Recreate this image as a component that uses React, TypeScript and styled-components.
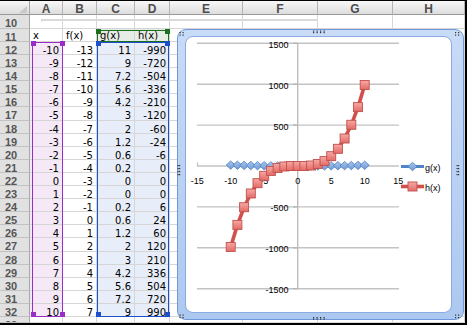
import React from 'react';
import styled, { createGlobalStyle } from 'styled-components';

const GlobalStyle = createGlobalStyle`
  html, body { margin: 0; padding: 0; background: #fff; }
  body { font-family: "DejaVu Sans", Verdana, sans-serif; }
`;

const COLS = [30, 33, 34, 38, 35, 73, 75, 75, 72];
const LETTERS = ['A', 'B', 'C', 'D', 'E', 'F', 'G', 'H'];

const PINK = '#f5e9f7';
const BLUE_TINT = '#e7edf9';
const GREEN_TINT = '#e6ede4';

const Sheet = styled.div`
  position: relative;
  box-sizing: border-box;
  width: 467px;
  height: 325px;
  border-top: 1px solid #000;
  border-right: 2px solid #000;
  border-bottom: 2px solid #000;
  overflow: hidden;
  display: grid;
  grid-template-columns: ${COLS.map((c) => c + 'px').join(' ')};
  grid-template-rows: 14px 14px 13px repeat(21, 13.1px) 1fr;
  background: #fff;
`;

const Corner = styled.div`
  grid-row: 1;
  grid-column: 1;
  position: relative;
  box-sizing: border-box;
  background: linear-gradient(#f7f7f7, #dcdcdc);
  border-right: 1px solid #a6a6a6;
  border-bottom: 1px solid #9a9a9a;
  &::after {
    content: '';
    position: absolute;
    right: 2px;
    bottom: 1px;
    width: 0;
    height: 0;
    border-left: 8px solid transparent;
    border-bottom: 7px solid #c9c9c9;
  }
`;

const ColHead = styled.div<{ $c: number }>`
  grid-row: 1;
  grid-column: ${(p) => p.$c};
  box-sizing: border-box;
  background: linear-gradient(#f8f8f8, #dddddd);
  border-right: 1px solid #b3b3b3;
  border-bottom: 1px solid #9a9a9a;
  font: bold 12px/13px "Liberation Sans", Arial, sans-serif;
  color: #4d4d4d;
  text-align: center;
  padding-top: 2px;
`;

const RowHead = styled.div<{ $r: number }>`
  grid-row: ${(p) => p.$r};
  grid-column: 1;
  box-sizing: border-box;
  background: #e1e1e1;
  border-right: 1px solid #a6a6a6;
  border-bottom: 1px solid #c2c2c2;
  font: bold 11px/12px "Liberation Sans", Arial, sans-serif;
  color: #555;
  padding: 2px 0 0 5px;
  overflow: hidden;
`;

const Cell = styled.div<{ $r: number; $c: number; $tint?: string; $left?: boolean; $top: number }>`
  grid-row: ${(p) => p.$r};
  grid-column: ${(p) => p.$c};
  box-sizing: border-box;
  border-right: 1px solid #d6d6d6;
  border-bottom: 1px solid #d6d6d6;
  background: ${(p) => p.$tint ?? '#fff'};
  font: 10px/11px "DejaVu Sans", Verdana, sans-serif;
  color: #000;
  padding: ${(p) => p.$top}px 3px 0 3px;
  text-align: ${(p) => (p.$left ? 'left' : 'right')};
  white-space: nowrap;
`;

const Selection = styled.div<{ $color: string; $rows: string; $cols: string; $m: string }>`
  grid-row: ${(p) => p.$rows};
  grid-column: ${(p) => p.$cols};
  position: relative;
  box-sizing: border-box;
  margin: ${(p) => p.$m};
  border: 1.5px solid ${(p) => p.$color};
  pointer-events: none;
`;

const Handle = styled.span<{ $color: string; $x: 'left' | 'right'; $y: 'top' | 'bottom' }>`
  position: absolute;
  width: 5px;
  height: 5px;
  background: ${(p) => p.$color};
  ${(p) => p.$x}: -2.5px;
  ${(p) => (p.$y === 'top' ? 'top: -2px;' : 'bottom: -1px;')}
`;

const FaintEdge = styled.div`
  position: absolute;
  left: 41px;
  top: 18px;
  width: 276px;
  height: 1px;
  border-top: 2px solid #dadada;
  border-left: 1px solid #dadada;
  pointer-events: none;
`;

const ChartFrame = styled.div`
  position: absolute;
  left: 177px;
  top: 28px;
  width: 287px;
  height: 291px;
  box-sizing: border-box;
  border: 1px solid #6f98dc;
  border-radius: 9px;
  background: linear-gradient(180deg, #c8dbf7, #adc8f0);
  padding: 6px 11px 6px 7px;
  display: flex;
`;

const PlotArea = styled.div`
  flex: 1;
  background: #fff;
  border: 1px solid #8aabe2;
  border-radius: 8px;
`;

const ChartSvg = styled.svg`
  position: absolute;
  left: -1px;
  top: -1px;
  width: 287px;
  height: 291px;
  overflow: visible;
`;

const fmt = (v: number) => String(Math.round(v * 10) / 10);
const DATA = Array.from({ length: 21 }, (_, i) => {
  const x = i - 10;
  return { x, f: x - 3, g: Math.round(((x * x - x) / 10) * 10) / 10, h: x * x * x - x };
});

const X0 = 297.7;
const SX = 6.7;
const Y0 = 166;
const SY = 40.9 / 500;
const px = (x: number) => X0 + x * SX;
const py = (y: number) => Y0 - y * SY;

const Dots: React.FC<{ x: number; y: number; cols: number; rows: number; gx: number; gy: number }> = ({ x, y, cols, rows, gx, gy }) => {
  const out: React.ReactNode[] = [];
  for (let i = 0; i < cols; i++)
    for (let j = 0; j < rows; j++)
      out.push(<rect key={`${i}-${j}`} x={x + i * gx} y={y + j * gy} width={1.2} height={1.2} fill="#333" />);
  return <g>{out}</g>;
};

const Diamond: React.FC<{ cx: number; cy: number }> = ({ cx, cy }) => (
  <polygon
    points={`${cx},${cy - 4.2} ${cx + 4.5},${cy} ${cx},${cy + 4.2} ${cx - 4.5},${cy}`}
    fill="url(#gDia)"
    stroke="#4a7dc0"
    strokeWidth={0.8}
  />
);

const Square: React.FC<{ cx: number; cy: number }> = ({ cx, cy }) => (
  <rect x={cx - 4.5} y={cy - 4.5} width={9} height={9} fill="url(#gSq)" stroke="#c0504d" strokeWidth={0.9} />
);

const Chart: React.FC = () => {
  const yTicks = [1500, 1000, 500, 0, -500, -1000, -1500];
  const xTicks = [-15, -10, -5, 0, 5, 10, 15];
  const gPts = DATA.map((d) => `${px(d.x)},${py(d.g)}`).join(' ');
  const hPts = DATA.map((d) => `${px(d.x)},${py(d.h)}`).join(' ');
  return (
    <ChartSvg viewBox="177 29 287 291">
      <defs>
        <linearGradient id="gSq" x1="0" y1="0" x2="0" y2="1">
          <stop offset="0" stopColor="#f6a9a5" />
          <stop offset="1" stopColor="#e46a65" />
        </linearGradient>
        <linearGradient id="gDia" x1="0" y1="0" x2="0" y2="1">
          <stop offset="0" stopColor="#a9c6ec" />
          <stop offset="1" stopColor="#6f9ad6" />
        </linearGradient>
      </defs>
      {yTicks.map((v) => (
        <g key={v}>
          <line x1={197} x2={399} y1={py(v)} y2={py(v)} stroke="#c3c3c3" strokeWidth={1.4} />
          <line x1={293} x2={298} y1={py(v)} y2={py(v)} stroke="#b5b5b5" strokeWidth={1.4} />
          <text x={288.5} y={py(v) + 4.5} textAnchor="end" fontFamily="'Liberation Sans', Arial, sans-serif" fontSize={9} fill="#000">
            {v}
          </text>
        </g>
      ))}
      <line x1={X0} x2={X0} y1={py(1500)} y2={py(-1500)} stroke="#bdbdbd" strokeWidth={1.4} />
      <line x1={197.5} x2={197.5} y1={162.5} y2={166} stroke="#bdbdbd" strokeWidth={1.2} />
      {xTicks.map((v) => (
        <text key={v} x={px(v)} y={183.5} textAnchor="middle" fontFamily="'Liberation Sans', Arial, sans-serif" fontSize={9} fill="#000">
          {v}
        </text>
      ))}
      <polyline points={gPts} fill="none" stroke="#4f85c8" strokeWidth={3} strokeLinejoin="round" />
      {DATA.map((d) => (
        <Diamond key={d.x} cx={px(d.x)} cy={py(d.g)} />
      ))}
      <polyline points={hPts} fill="none" stroke="#d2504b" strokeWidth={3.6} strokeLinejoin="round" />
      {DATA.map((d) => (
        <Square key={d.x} cx={px(d.x)} cy={py(d.h)} />
      ))}
      <line x1={401} x2={424} y1={166.5} y2={166.5} stroke="#4f85c8" strokeWidth={3} />
      <Diamond cx={412.5} cy={166.5} />
      <text x={425} y={170.5} fontFamily="'Liberation Sans', Arial, sans-serif" fontSize={9} fill="#000">
        g(x)
      </text>
      <line x1={401} x2={424} y1={186.5} y2={186.5} stroke="#d2504b" strokeWidth={3.6} />
      <Square cx={412.5} cy={186.5} />
      <text x={425} y={190.5} fontFamily="'Liberation Sans', Arial, sans-serif" fontSize={9} fill="#000">
        h(x)
      </text>
      <Dots x={179.5} y={32} cols={2} rows={2} gx={3} gy={2.5} />
      <Dots x={455} y={32} cols={2} rows={2} gx={3} gy={2.5} />
      <Dots x={179.5} y={314.5} cols={2} rows={2} gx={3} gy={2.5} />
      <Dots x={455} y={314.5} cols={2} rows={2} gx={3} gy={2.5} />
      <Dots x={313} y={30.5} cols={4} rows={2} gx={3.5} gy={1.5} />
      <Dots x={313} y={317} cols={4} rows={2} gx={3.5} gy={1.5} />
      <Dots x={177.5} y={165} cols={2} rows={4} gx={1.5} gy={3} />
      <Dots x={456.5} y={165} cols={2} rows={4} gx={1.5} gy={3} />
    </ChartSvg>
  );
};

export default function App() {
  const cells: React.ReactNode[] = [];
  const rowLabels: number[] = Array.from({ length: 24 }, (_, i) => 10 + i);

  rowLabels.forEach((n, i) => {
    const gr = i + 2;
    cells.push(
      <RowHead key={`rh${n}`} $r={gr}>
        {n}
      </RowHead>
    );
    for (let c = 1; c <= 8; c++) {
      let text = '';
      let left = false;
      let tint: string | undefined;
      let top = 3;
      if (n === 11) {
        top = 1;
        left = true;
        text = ['x', 'f(x)', 'g(x)', 'h(x)'][c - 1] ?? '';
        if (c === 3 || c === 4) tint = GREEN_TINT;
      } else if (n >= 12 && n <= 32) {
        const d = DATA[n - 12];
        text = c === 1 ? String(d.x) : c === 2 ? String(d.f) : c === 3 ? fmt(d.g) : c === 4 ? String(d.h) : '';
        if (c === 1) tint = PINK;
        if (c === 3 || c === 4) tint = BLUE_TINT;
      }
      cells.push(
        <Cell key={`c${n}-${c}`} $r={gr} $c={c + 1} $tint={tint} $left={left} $top={top}>
          {text}
        </Cell>
      );
    }
  });

  return (
    <>
      <GlobalStyle />
      <Sheet>
        <Corner />
        {LETTERS.map((l, i) => (
          <ColHead key={l} $c={i + 2}>
            {l}
          </ColHead>
        ))}
        {cells}
        <Selection $color="#1b6e1b" $rows="3 / 4" $cols="4 / 6" $m="0.5px 1.5px 0 0">
          <Handle $color="#1b6e1b" $x="left" $y="top" />
          <Handle $color="#1b6e1b" $x="right" $y="top" />
        </Selection>
        <Selection $color="#9a2cc8" $rows="4 / 25" $cols="2 / 3" $m="0 0 0 2px">
          <Handle $color="#9a2cc8" $x="left" $y="top" />
          <Handle $color="#9a2cc8" $x="right" $y="top" />
          <Handle $color="#9a2cc8" $x="left" $y="bottom" />
          <Handle $color="#9a2cc8" $x="right" $y="bottom" />
        </Selection>
        <Selection $color="#1d4fcc" $rows="4 / 25" $cols="4 / 6" $m="0 1.5px 0 0">
          <Handle $color="#1d4fcc" $x="left" $y="top" />
          <Handle $color="#1d4fcc" $x="right" $y="top" />
          <Handle $color="#1d4fcc" $x="left" $y="bottom" />
          <Handle $color="#1d4fcc" $x="right" $y="bottom" />
        </Selection>
        <FaintEdge />
        <ChartFrame>
          <PlotArea />
          <Chart />
        </ChartFrame>
      </Sheet>
    </>
  );
}
